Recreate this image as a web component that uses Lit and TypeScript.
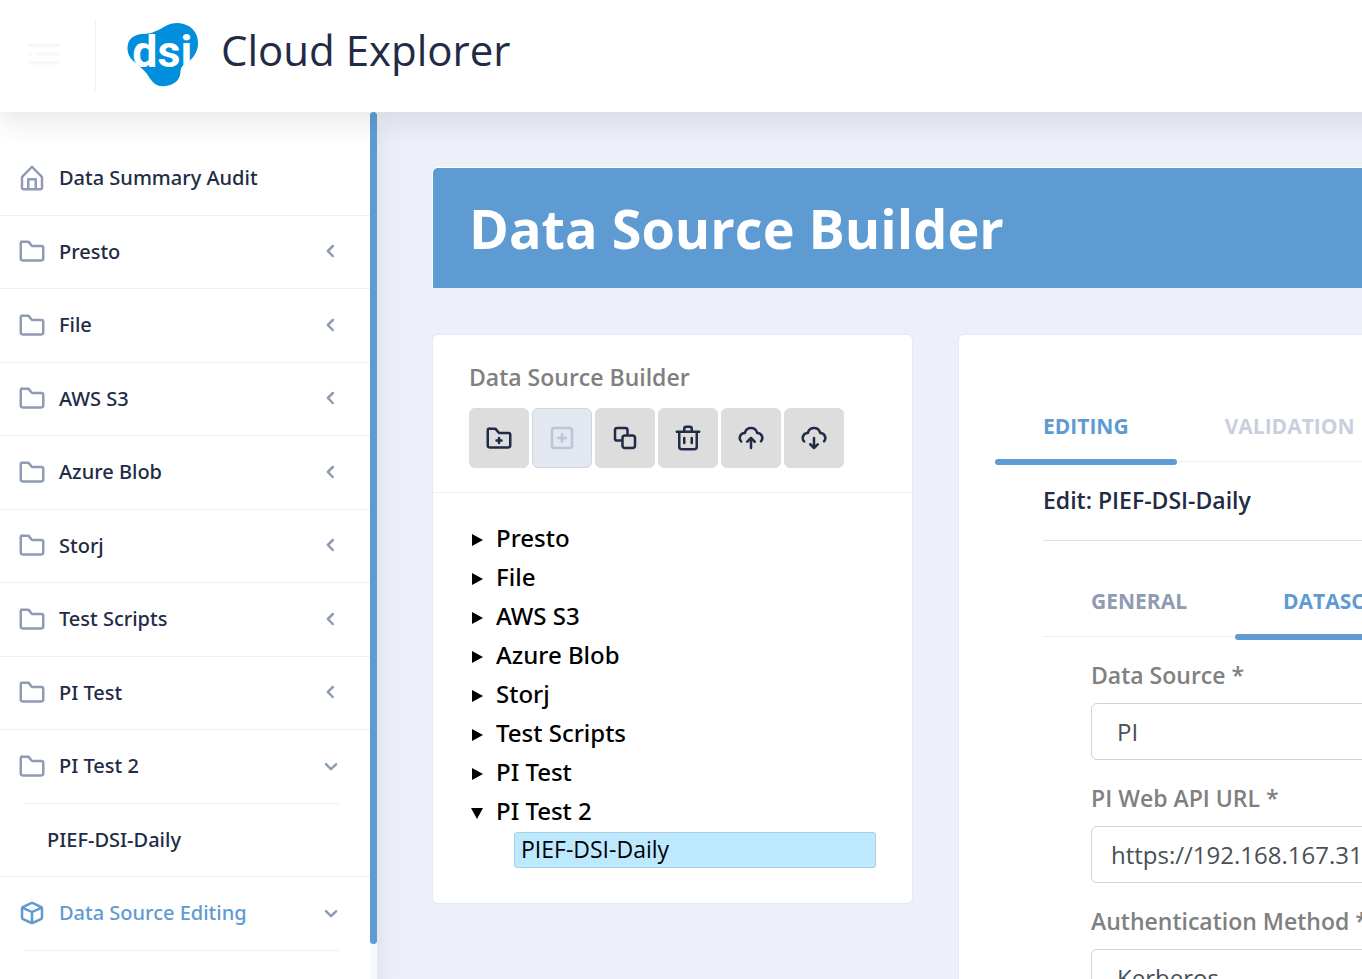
import { LitElement, html, css, svg } from "lit";
import { customElement, property, state } from "lit/decorators.js";
import { classMap } from "lit/directives/class-map.js";

const FOLDER =
  "M19.5 20.5h-15A2.47 2.47 0 0 1 2 18.07V5.93A2.47 2.47 0 0 1 4.5 3.5h4.6a1 1 0 0 1 .77.37l2.6 3.18h7A2.47 2.47 0 0 1 22 9.48v8.59a2.47 2.47 0 0 1-2.5 2.43zM4 13.76v4.31a.46.46 0 0 0 .5.43h15a.46.46 0 0 0 .5-.43V9.48a.46.46 0 0 0-.5-.43H12a1 1 0 0 1-.77-.37L8.63 5.5H4.5a.46.46 0 0 0-.5.43z";
const CLOUD =
  "M17.67 7A6 6 0 0 0 6.33 7a5 5 0 0 0-3.08 8.27A1 1 0 1 0 4.75 14 3 3 0 0 1 7 9h.1a1 1 0 0 0 1-.8 4 4 0 0 1 7.84 0 1 1 0 0 0 1 .8H17a3 3 0 0 1 2.25 5 1 1 0 0 0 .09 1.42 1 1 0 0 0 .66.25 1 1 0 0 0 .75-.34A5 5 0 0 0 17.67 7z";

const ICONS: Record<string, string[]> = {
  home: [
    "M20.42 10.18L12.71 2.3a1 1 0 0 0-1.42 0l-7.71 7.89A2 2 0 0 0 3 11.62V20a2 2 0 0 0 1.89 2h14.22A2 2 0 0 0 21 20v-8.38a2.07 2.07 0 0 0-.58-1.44zM10 20v-6h4v6zm9 0h-3v-7a1 1 0 0 0-1-1H9a1 1 0 0 0-1 1v7H5v-8.42l7-7.15 7 7.19z",
  ],
  folder: [FOLDER],
  "folder-add": [
    FOLDER,
    "M14 13h-1v-1a1 1 0 0 0-2 0v1h-1a1 1 0 0 0 0 2h1v1a1 1 0 0 0 2 0v-1h1a1 1 0 0 0 0-2z",
  ],
  "plus-square": [
    "M18 3H6a3 3 0 0 0-3 3v12a3 3 0 0 0 3 3h12a3 3 0 0 0 3-3V6a3 3 0 0 0-3-3zm1 15a1 1 0 0 1-1 1H6a1 1 0 0 1-1-1V6a1 1 0 0 1 1-1h12a1 1 0 0 1 1 1z",
    "M15 11h-2V9a1 1 0 0 0-2 0v2H9a1 1 0 0 0 0 2h2v2a1 1 0 0 0 2 0v-2h2a1 1 0 0 0 0-2z",
  ],
  copy: [
    "M18 21h-6a3 3 0 0 1-3-3v-6a3 3 0 0 1 3-3h6a3 3 0 0 1 3 3v6a3 3 0 0 1-3 3zm-6-10a1 1 0 0 0-1 1v6a1 1 0 0 0 1 1h6a1 1 0 0 0 1-1v-6a1 1 0 0 0-1-1z",
    "M9.73 15H5.67A2.68 2.68 0 0 1 3 12.33V5.67A2.68 2.68 0 0 1 5.67 3h6.66A2.68 2.68 0 0 1 15 5.67V9.4h-2V5.67a.67.67 0 0 0-.67-.67H5.67a.67.67 0 0 0-.67.67v6.66a.67.67 0 0 0 .67.67h4.06z",
  ],
  trash: [
    "M21 6h-5V4.33A2.42 2.42 0 0 0 13.5 2h-3A2.42 2.42 0 0 0 8 4.33V6H3a1 1 0 0 0 0 2h1v11a3 3 0 0 0 3 3h10a3 3 0 0 0 3-3V8h1a1 1 0 0 0 0-2zM10 4.33c0-.16.21-.33.5-.33h3c.29 0 .5.17.5.33V6h-4zM18 19a1 1 0 0 1-1 1H7a1 1 0 0 1-1-1V8h12z",
    "M9 17a1 1 0 0 0 1-1v-4a1 1 0 0 0-2 0v4a1 1 0 0 0 1 1z",
    "M15 17a1 1 0 0 0 1-1v-4a1 1 0 0 0-2 0v4a1 1 0 0 0 1 1z",
  ],
  "cloud-upload": [
    "M12.71 11.29a1 1 0 0 0-1.4 0l-3 2.9a1 1 0 1 0 1.38 1.44L11 14.36V20a1 1 0 0 0 2 0v-5.59l1.29 1.3a1 1 0 0 0 1.42 0 1 1 0 0 0 0-1.42z",
    CLOUD,
  ],
  "cloud-download": [
    "M14.31 16.38L13 17.64V12a1 1 0 0 0-2 0v5.59l-1.29-1.3a1 1 0 0 0-1.42 1.42l3 3A1 1 0 0 0 12 21a1 1 0 0 0 .69-.28l3-2.9a1 1 0 1 0-1.38-1.44z",
    CLOUD,
  ],
  cube: [
    "M20.66 7.26c0-.07-.1-.14-.15-.21l-.09-.1a2.5 2.5 0 0 0-.86-.68l-6.4-3a2.7 2.7 0 0 0-2.26 0l-6.4 3a2.6 2.6 0 0 0-.86.68L3.52 7a1 1 0 0 0-.15.2A2.39 2.39 0 0 0 3 8.46v7.06a2.49 2.49 0 0 0 1.46 2.26l6.4 3a2.7 2.7 0 0 0 2.27 0l6.4-3A2.49 2.49 0 0 0 21 15.54V8.46a2.39 2.39 0 0 0-.34-1.2zm-8.95-2.2a.73.73 0 0 1 .58 0l5.33 2.48L12 10.15 6.38 7.54zM5.3 16a.47.47 0 0 1-.3-.43V9.1l6 2.79v6.72zm13.39 0L13 18.61v-6.72l6-2.79v6.44a.48.48 0 0 1-.31.46z",
  ],
  "chevron-left": [
    "M13.36 17a1 1 0 0 1-.72-.31l-3.86-4a1 1 0 0 1 0-1.4l4-4a1 1 0 1 1 1.42 1.42L10.9 12l3.18 3.3a1 1 0 0 1 0 1.41 1 1 0 0 1-.72.29z",
  ],
  "chevron-down": [
    "M12 15.5a1 1 0 0 1-.71-.29l-4-4a1 1 0 1 1 1.42-1.42L12 13.1l3.3-3.18a1 1 0 1 1 1.38 1.44l-4 3.86a1 1 0 0 1-.68.28z",
  ],
  menu: [
    "M4 11a1 1 0 1 0 0 2 1 1 0 0 0 0-2z",
    "M7.9 11h12.2a.9.9 0 0 1 0 2H7.9a.9.9 0 0 1 0-2z",
    "M3.9 16h16.2a.9.9 0 0 1 0 2H3.9a.9.9 0 0 1 0-2z",
    "M3.9 6h16.2a.9.9 0 0 1 0 2H3.9a.9.9 0 0 1 0-2z",
  ],
};

@customElement("app-icon")
class AppIcon extends LitElement {
  @property() name = "folder";

  static styles = css`
    :host {
      display: block;
      flex: none;
      width: 30px;
      height: 30px;
    }
    .glyph {
      display: block;
      width: 100%;
      height: 100%;
      fill: currentColor;
    }
  `;

  render() {
    return html`<svg class="glyph" viewBox="0 0 24 24" aria-hidden="true">
      ${ICONS[this.name].map((d) => svg`<path d=${d}></path>`)}
    </svg>`;
  }
}

@customElement("app-header")
class AppHeader extends LitElement {
  static styles = css`
    :host {
      display: flex;
      align-items: center;
      height: 112px;
      background: #fff;
      box-shadow: 0 12px 24px 0 rgba(44, 51, 73, 0.1);
      color: #222b45;
    }
    .toggle {
      display: flex;
      align-items: center;
      margin: 0 0 4px 23px;
      padding: 0;
      border: 0;
      background: none;
      color: #f7f7f7;
    }
    .toggle app-icon {
      width: 42px;
      height: 42px;
    }
    .brand {
      display: flex;
      align-items: center;
      height: 72px;
      margin: 0 0 2px 30px;
      padding-left: 30px;
      border-left: 1px solid #edf1f7;
      color: inherit;
      text-decoration: none;
    }
    .logo {
      display: block;
      width: 74px;
      height: 66px;
    }
    .mark {
      fill: #008fdc;
    }
    .letters {
      fill: #fff;
      font: 700 134px Roboto, sans-serif;
    }
    .name {
      margin-left: 21px;
      padding-bottom: 10px;
      font-size: 42px;
      line-height: 60px;
      white-space: nowrap;
    }
  `;

  render() {
    return html`
      <button class="toggle" aria-label="Toggle menu"><app-icon name="menu"></app-icon></button>
      <a class="brand" href="#">
        <svg class="logo" viewBox="49 36 222 198" role="img" aria-label="dsi">
          <path
            class="mark"
            d="M54 108C56 88 72 73 100 72C130 71 146 60 168 48C184 39 204 37 222 42C250 49 267 74 265 104C263 128 248 148 232 158C215 168 213 174 212 190C210 214 186 229 160 229C134 229 124 210 112 192C102 177 84 166 70 152C56 138 52 124 54 108Z"
          ></path>
          <text class="letters" x="68" y="171">dsi</text>
        </svg>
        <span class="name">Cloud Explorer</span>
      </a>
    `;
  }
}

interface NavEntry {
  label: string;
  icon: string;
  arrow?: "left" | "down";
  active?: boolean;
  children?: string[];
}

const NAV: NavEntry[] = [
  { label: "Data Summary Audit", icon: "home" },
  { label: "Presto", icon: "folder", arrow: "left" },
  { label: "File", icon: "folder", arrow: "left" },
  { label: "AWS S3", icon: "folder", arrow: "left" },
  { label: "Azure Blob", icon: "folder", arrow: "left" },
  { label: "Storj", icon: "folder", arrow: "left" },
  { label: "Test Scripts", icon: "folder", arrow: "left" },
  { label: "PI Test", icon: "folder", arrow: "left" },
  { label: "PI Test 2", icon: "folder", arrow: "down", children: ["PIEF-DSI-Daily"] },
  { label: "Data Source Editing", icon: "cube", arrow: "down", active: true, children: [] },
];

@customElement("app-sidebar")
class AppSidebar extends LitElement {
  static styles = css`
    :host {
      display: flex;
      width: 377px;
      flex: none;
      overflow: hidden;
      background: #fff;
      color: #222b45;
    }
    .menu {
      flex: 1;
      min-width: 0;
      padding-top: 30px;
    }
    .list {
      margin: 0;
      padding: 0;
      list-style: none;
    }
    .entry {
      border-bottom: 1px solid #edf1f7;
    }
    .entry:last-child {
      border-bottom: 0;
    }
    .link {
      display: flex;
      align-items: center;
      padding: 20px 24px 21px 17px;
      color: inherit;
      font-family: "Noto Sans", sans-serif;
      font-size: 20px;
      font-weight: 500;
      line-height: 1.575;
      text-decoration: none;
    }
    .icon {
      margin-right: 12px;
      color: #8f9bb3;
    }
    .label {
      flex: 1;
    }
    .arrow {
      color: #8f9bb3;
    }
    .active,
    .active .icon {
      color: #5f9bd3;
    }
    .active .arrow {
      color: #8f9bb3;
    }
    .children {
      margin: 0 30px 0 23px;
      padding: 0;
      border-top: 1px solid #edf1f7;
      list-style: none;
    }
    .children .link {
      padding-left: 24px;
    }
    .track {
      display: flex;
      flex-direction: column;
      width: 7px;
      background: #f7f9fc;
    }
    .thumb {
      height: 96%;
      border-radius: 4px;
      background: #5f9bd3;
    }
  `;

  render() {
    return html`
      <nav class="menu">
        <ul class="list">
          ${NAV.map(
            (n) => html`<li class="entry">
              <a class=${classMap({ link: true, active: !!n.active })} href="#">
                <app-icon class="icon" name=${n.icon}></app-icon>
                <span class="label">${n.label}</span>
                ${n.arrow ? html`<app-icon class="arrow" name="chevron-${n.arrow}"></app-icon>` : ""}
              </a>
              ${n.children
                ? html`<ul class="children">
                    ${n.children.map((c) => html`<li><a class="link" href="#">${c}</a></li>`)}
                  </ul>`
                : ""}
            </li>`,
          )}
        </ul>
      </nav>
      <div class="track"><div class="thumb"></div></div>
    `;
  }
}

const TREE = ["Presto", "File", "AWS S3", "Azure Blob", "Storj", "Test Scripts", "PI Test", "PI Test 2"];

const TOOLS = [
  { icon: "folder-add", label: "Add group" },
  { icon: "plus-square", label: "Add data source", disabled: true },
  { icon: "copy", label: "Copy" },
  { icon: "trash", label: "Delete" },
  { icon: "cloud-upload", label: "Upload" },
  { icon: "cloud-download", label: "Download" },
];

@customElement("source-tree")
class SourceTree extends LitElement {
  @state() private open = "PI Test 2";

  static styles = css`
    :host {
      display: block;
      border: 1px solid #e4e9f2;
      border-radius: 6px;
      background: #fff;
    }
    .head {
      padding: 24px 36px;
      border-bottom: 1px solid #edf1f7;
    }
    .title {
      margin: 0 0 13px;
      color: #808080;
      font-size: 23px;
      font-weight: 600;
      line-height: 36px;
    }
    .tools {
      display: flex;
      gap: 3px;
    }
    .tool {
      display: flex;
      align-items: center;
      justify-content: center;
      width: 60px;
      height: 60px;
      padding: 0;
      border: 1px solid #ddd;
      border-radius: 6px;
      background: #ddd;
      color: #222b45;
    }
    .tool:disabled {
      border-color: #cfd5e3;
      background: #e3e7f0;
      color: #bcc4d6;
    }
    .tree {
      margin: 0;
      padding: 25px 36px 35px;
      color: #000;
      font-size: 23px;
      line-height: 39px;
      list-style: none;
    }
    .node {
      display: flex;
      align-items: center;
      width: 100%;
      padding: 0 0 0 2px;
      border: 0;
      background: none;
      color: inherit;
      font: inherit;
      font-family: "Noto Sans", sans-serif;
      font-size: 24px;
      font-weight: 500;
      text-align: left;
    }
    .caret {
      width: 13px;
      height: 12px;
      margin: 4px 12px 0 0;
    }
    .leaf {
      margin: 2px 0 0 45px;
      padding: 0 6px 2px;
      border: 1px solid #a9cfe0;
      border-radius: 3px;
      background: #bde9ff;
      line-height: 32px;
    }
  `;

  render() {
    return html`
      <div class="head">
        <h2 class="title">Data Source Builder</h2>
        <div class="tools">
          ${TOOLS.map(
            (t) => html`<button class="tool" aria-label=${t.label} ?disabled=${t.disabled}>
              <app-icon name=${t.icon}></app-icon>
            </button>`,
          )}
        </div>
      </div>
      <ul class="tree">
        ${TREE.map((label) => {
          const open = label === this.open;
          return html`<li>
            <button class="node" aria-expanded=${open} @click=${() => (this.open = open ? "" : label)}>
              <svg class="caret" viewBox="0 0 13 12" aria-hidden="true">
                <path d=${open ? "M0 1h12L6 12z" : "M1 0l11 6-11 6z"}></path>
              </svg>
              ${label}
            </button>
            ${open ? html`<div class="leaf">PIEF-DSI-Daily</div>` : ""}
          </li>`;
        })}
      </ul>
    `;
  }
}

@customElement("source-editor")
class SourceEditor extends LitElement {
  static styles = css`
    :host {
      display: block;
      padding: 54px 36px 0;
      border: 1px solid #e4e9f2;
      border-radius: 6px;
      background: #fff;
      color: #222b45;
    }
    .tabs {
      display: flex;
      margin-bottom: 4px;
      box-shadow: inset 0 -1px #edf1f7;
    }
    .tab {
      position: relative;
      margin-bottom: -3px;
      padding: 25px 48px 27px;
      border: 0;
      background: none;
      color: #8f9bb3;
      font: 700 21px/24px "Open Sans", sans-serif;
      text-transform: uppercase;
    }
    .tab:disabled {
      color: #c9cfdd;
    }
    .tab.selected {
      color: #5f9bd3;
    }
    .tab.selected::after {
      content: "";
      position: absolute;
      right: 0;
      bottom: 0;
      left: 0;
      height: 6px;
      border-radius: 3px;
      background: #5f9bd3;
    }
    .body {
      padding: 0 48px;
    }
    .heading {
      margin: 0 0 23px;
      padding: 16px 0 22px;
      border-bottom: 1px solid #e0e0e0;
      font-size: 23px;
      font-weight: 600;
      line-height: 36px;
    }
    .form {
      display: flex;
      flex-direction: column;
      gap: 20px;
      padding: 16px 48px 48px;
    }
    .field {
      display: flex;
      flex-direction: column;
      gap: 10px;
    }
    .caption {
      color: #808080;
      font-size: 23px;
      font-weight: 600;
      line-height: 36px;
    }
    .control {
      appearance: none;
      box-sizing: border-box;
      width: 100%;
      height: 57px;
      margin: 0;
      padding: 0 19px;
      border: 1px solid #ced4de;
      border-radius: 6px;
      background: #fff;
      color: #495057;
      font: 400 24px/36px "Open Sans", sans-serif;
    }
    .select {
      padding-left: 25px;
    }
  `;

  render() {
    return html`
      <div class="tabs" role="tablist">
        <button class="tab selected" role="tab" aria-selected="true">Editing</button>
        <button class="tab" role="tab" disabled>Validation</button>
      </div>
      <div class="body">
        <h3 class="heading">Edit: PIEF-DSI-Daily</h3>
        <div class="tabs" role="tablist">
          <button class="tab" role="tab">General</button>
          <button class="tab selected" role="tab" aria-selected="true">Datasource</button>
        </div>
        <form class="form">
          <div class="field">
            <label class="caption" for="source">Data Source *</label>
            <select class="control select" id="source"><option>PI</option></select>
          </div>
          <div class="field">
            <label class="caption" for="url">PI Web API URL *</label>
            <input class="control" id="url" type="text" value="https://192.168.167.31" />
          </div>
          <div class="field">
            <label class="caption" for="auth">Authentication Method *</label>
            <select class="control select" id="auth"><option>Kerberos</option></select>
          </div>
        </form>
      </div>
    `;
  }
}

@customElement("app-root")
class AppRoot extends LitElement {
  static styles = css`
    :host {
      display: flex;
      flex-direction: column;
      height: 100vh;
      overflow: hidden;
      background: #edf0f8;
      font-family: "Open Sans", sans-serif;
    }
    .header {
      position: relative;
      z-index: 2;
      flex: none;
      margin-right: -36px;
    }
    .columns {
      display: flex;
      flex: 1;
      min-height: 0;
    }
    .sidebar {
      position: relative;
      z-index: 1;
      box-shadow: 0 12px 24px 0 rgba(44, 51, 73, 0.1);
    }
    .main {
      flex: 1;
      min-width: 0;
      overflow: hidden;
      padding: 55px 0 0 55px;
    }
    .content {
      min-width: 1240px;
    }
    .banner {
      margin: 0 0 46px;
      padding: 18px 36px;
      border: 1px solid #fff;
      border-bottom: 0;
      border-radius: 6px 6px 0 0;
      background: #5f9bd3;
      color: #fff;
      font-size: 54px;
      font-weight: 700;
      line-height: 84px;
    }
    .panels {
      display: grid;
      grid-template-columns: 481px minmax(0, 1fr);
      align-items: start;
      gap: 45px;
    }
  `;

  render() {
    return html`
      <app-header class="header"></app-header>
      <div class="columns">
        <app-sidebar class="sidebar"></app-sidebar>
        <main class="main">
          <div class="content">
            <h1 class="banner">Data Source Builder</h1>
            <div class="panels">
              <source-tree></source-tree>
              <source-editor></source-editor>
            </div>
          </div>
        </main>
      </div>
    `;
  }
}
